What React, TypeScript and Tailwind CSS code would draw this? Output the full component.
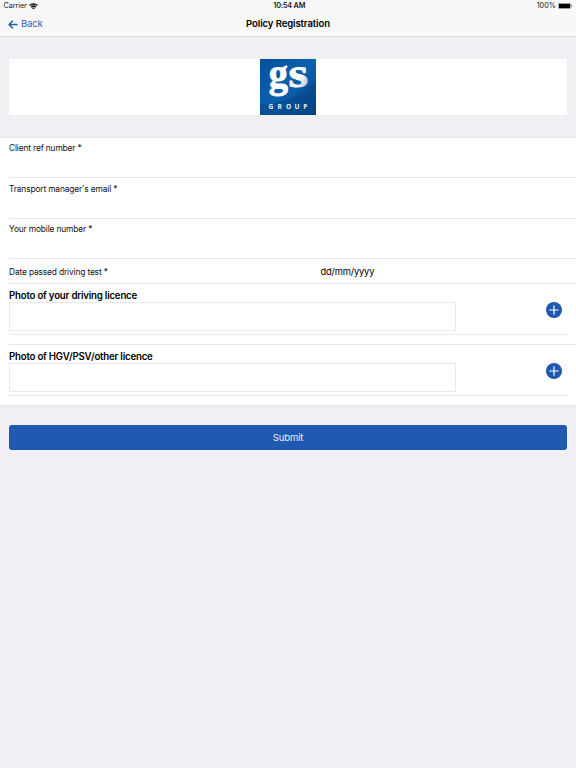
const textFields = [
  'Client ref number *',
  "Transport manager's email *",
  'Your mobile number *',
]

function StatusBar() {
  return (
    <div className="grid h-3 grid-cols-3 items-center pl-[3.5px] pr-[3px] text-[7.3px] leading-3 text-[#222]">
      <div className="flex items-center gap-[3px] tracking-[-0.1px]">
        <span className="w-[22px] whitespace-nowrap">Carrier</span>
        <svg width="9" height="6.5" viewBox="0 0 16 12" fill="none" stroke="#111" strokeWidth="2.8">
          <path d="M1 4.6a10 10 0 0 1 14 0" />
          <path d="M3.8 7.8a6 6 0 0 1 8.4 0" />
          <path d="M8 12 5.6 9.6a3.5 3.5 0 0 1 4.8 0Z" fill="#111" stroke="none" />
        </svg>
      </div>
      <span className="pl-[2px] text-center font-semibold tracking-[-0.2px]">10:54 AM</span>
      <div className="flex items-center justify-end gap-[2px]">
        <span>100%</span>
        <svg width="15" height="6" viewBox="0 0 15 6">
          <rect x="0.25" y="0.25" width="12.5" height="5.5" rx="1.2" fill="#fff" stroke="#777" strokeWidth="0.5" />
          <rect x="0.8" y="0.8" width="11.4" height="4.4" rx="0.6" fill="#000" />
          <rect x="13.3" y="2" width="0.8" height="2" rx="0.4" fill="#777" />
        </svg>
      </div>
    </div>
  )
}

function Logo() {
  return (
    <svg className="overflow-visible" width="56" height="56" viewBox="0 0 56 56">
      <defs>
        <linearGradient id="tile" x1="0" y1="0" x2="1" y2="1">
          <stop offset="0" stopColor="#08519a" />
          <stop offset="0.5" stopColor="#0a60ae" />
          <stop offset="1" stopColor="#07458a" />
        </linearGradient>
        <linearGradient id="letter" x1="0" y1="0" x2="1" y2="1">
          <stop offset="0.6" stopColor="#fff" />
          <stop offset="0.85" stopColor="#b9c9e2" />
        </linearGradient>
      </defs>
      <rect width="56" height="56" fill="url(#tile)" />
      <path d="M0 46Q34 44 56 22V56H0Z" fill="#06407f" opacity="0.45" />
      <text x="8.7" y="27.8" fontFamily="Liberation Serif" fontWeight="700" fontSize="41" fill="#fff" stroke="#fff" strokeWidth="0.9" textLength="19.2" lengthAdjust="spacingAndGlyphs">
        g
      </text>
      <text x="28.4" y="27.8" fontFamily="Liberation Serif" fontWeight="700" fontSize="41" fill="url(#letter)" stroke="url(#letter)" strokeWidth="0.9" textLength="19.6" lengthAdjust="spacingAndGlyphs">
        s
      </text>
      <text y="50.4" fontFamily="Open Sans" fontWeight="700" fontSize="6.6" fill="#e6eef8">
        <tspan x="8.6 17.6 25.9 34.6 43.2">GROUP</tspan>
      </text>
    </svg>
  )
}

function PhotoField({ label }: { label: string }) {
  return (
    <div className="relative ml-[9px] h-[51px] pt-[5px]">
      <p className="h-[13px] text-[9.7px] font-semibold leading-[13px] tracking-[-0.22px] text-black">{label}</p>
      <div className="h-[29px] w-[447px] border border-[#e9e9e9]" />
      <button className="absolute right-[14px] top-[18px] size-4" aria-label="Add photo">
        <svg width="16" height="16" viewBox="0 0 16 16">
          <circle cx="8" cy="8" r="8" fill="#2158b0" />
          <path d="M8 3.8v8.4M3.8 8h8.4" stroke="#fff" strokeWidth="1.2" strokeLinecap="round" />
        </svg>
      </button>
      <div className="mr-2 mt-[3px] h-px bg-[#ececee]" />
    </div>
  )
}

export default function App() {
  return (
    <div className="min-h-screen bg-[#efeff4] font-['Inter',sans-serif] text-black">
      <header className="h-[37px] border-b border-[#dedee0] bg-[#f8f8f8]">
        <StatusBar />
        <nav className="grid h-6 grid-cols-3 items-center">
          <a className="flex items-center gap-[3px] pl-2 text-[9.5px] tracking-[-0.2px] text-[#2f60b8]">
            <svg width="10" height="9" viewBox="0 0 10 9" fill="none" stroke="#2158b0" strokeWidth="1.4" strokeLinecap="round" strokeLinejoin="round">
              <path d="M9 4.5H1M4.5 1 1 4.5 4.5 8" />
            </svg>
            Back
          </a>
          <h1 className="whitespace-nowrap pt-px text-center text-[9.6px] font-semibold tracking-[-0.13px]">Policy Registration</h1>
        </nav>
      </header>

      <main>
        <div className="mx-[9px] mt-[22px] flex h-14 justify-center bg-white">
          <Logo />
        </div>

        <form className="mt-[22px] h-[269px] border-y border-[#e6e6ea] bg-white">
          {textFields.map((label, i) => (
            <div key={label} className={i === 0 ? 'ml-[9px] h-10 border-b border-[#e6e6e8] pt-1' : 'ml-[9px] h-[40.5px] border-b border-[#e6e6e8] pt-[4.5px]'}>
              <label className="block text-[8.4px] leading-3 tracking-[-0.15px] text-[#111]">{label}</label>
            </div>
          ))}
          <div className="ml-[9px] flex h-[25px] items-center border-b border-[#e6e6e8]">
            <label className="w-[311.5px] pt-[2px] text-[8.4px] leading-3 tracking-[-0.15px] text-[#111]">Date passed driving test *</label>
            <span className="pt-px text-[9.4px] leading-3 tracking-[-0.2px] text-black">dd/mm/yyyy</span>
          </div>
          <PhotoField label="Photo of your driving licence" />
          <div className="ml-[9px] mt-[9px] h-px bg-[#e6e6e8]" />
          <PhotoField label="Photo of HGV/PSV/other licence" />
        </form>

        <button className="mx-[9px] mt-[19.4px] block h-[25px] w-[558px] rounded-[3px] bg-[#2158b0] text-[9.6px] leading-[25px] tracking-[-0.15px] text-white/90">
          Submit
        </button>
      </main>
    </div>
  )
}
